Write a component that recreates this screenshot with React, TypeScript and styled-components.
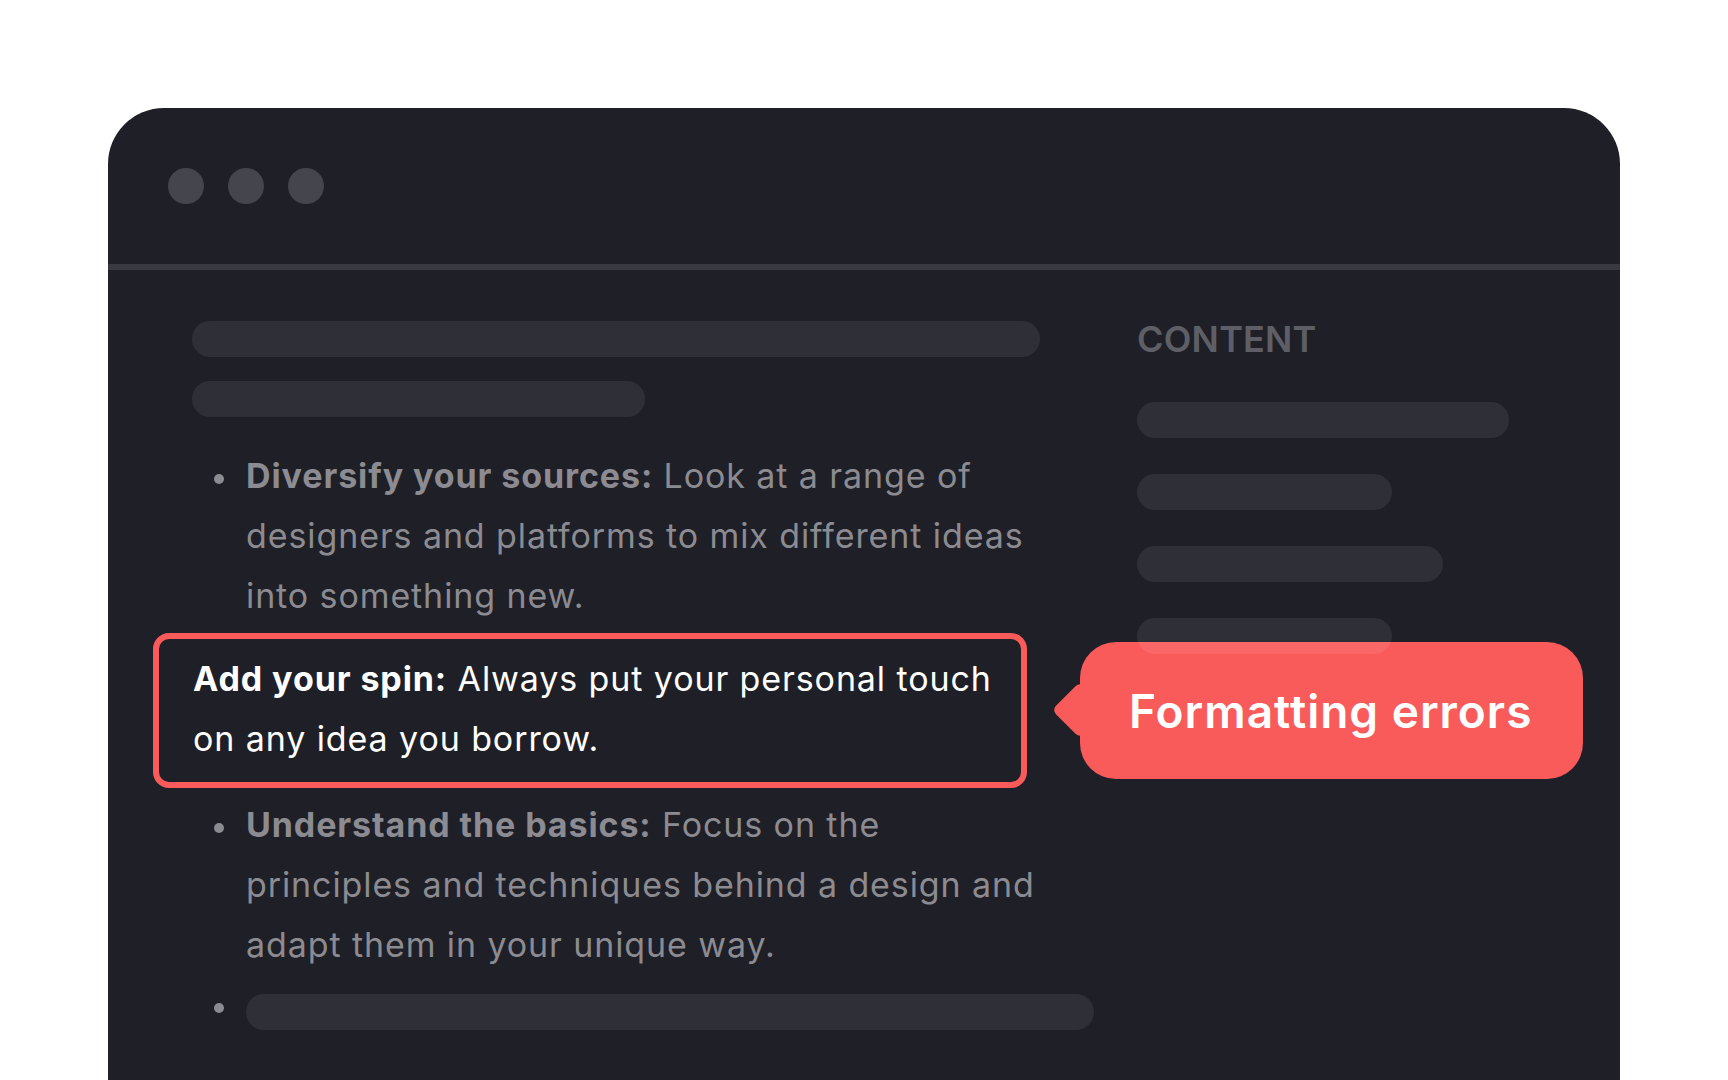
import styled, { createGlobalStyle } from 'styled-components';
import { FC, ReactNode } from 'react';

const GlobalStyle = createGlobalStyle`
	html, body {
		margin: 0;
		padding: 0;
		background: #ffffff;
	}
	body {
		font-family: Inter, 'Noto Sans', 'Liberation Sans', sans-serif;
	}
`;

const COLORS = {
	window: '#1f1f27',
	dot: '#45454e',
	divider: '#393942',
	skeleton: 'rgba(255, 255, 255, 0.075)',
	muted: '#8b8b91',
	heading: '#5e5f66',
	red: '#f95b5b',
	white: '#ffffff',
};

type BulletProps = {
	bulletTop?: number;
	children: ReactNode;
};

const Bullet: FC<BulletProps> = ({ bulletTop = 28, children }) => (
	<Item>
		<Dot style={{ top: bulletTop }} />
		{children}
	</Item>
);

const App: FC = () => {
	return (
		<>
			<GlobalStyle />
			<Page>
				<Window>
					<TitleBar>
						<TrafficDot />
						<TrafficDot />
						<TrafficDot />
					</TitleBar>
					<Body>
						<Main>
							<Skeleton width={848} />
							<Skeleton width={453} />
							<List>
								<Bullet>
									<Paragraph>
										<strong>Diversify your sources:</strong> Look at a range of designers and
										platforms to mix different ideas into something new.
									</Paragraph>
								</Bullet>
								<Highlight>
									<strong>Add your spin:</strong> Always put your personal touch on any idea
									you borrow.
								</Highlight>
								<Bullet>
									<Paragraph>
										<strong>Understand the basics:</strong> Focus on the principles and
										techniques behind a design and adapt them in your unique way.
									</Paragraph>
								</Bullet>
								<Bullet bulletTop={21}>
									<LineSlot>
										<Skeleton width={848} />
									</LineSlot>
								</Bullet>
							</List>
						</Main>
						<Sidebar>
							<SidebarTitle>CONTENT</SidebarTitle>
							<SidebarLinks>
								<Skeleton width={372} />
								<Skeleton width={255} />
								<Skeleton width={306} />
								<Skeleton width={255} />
							</SidebarLinks>
						</Sidebar>
						<Callout>
							<CalloutText>Formatting errors</CalloutText>
						</Callout>
					</Body>
				</Window>
			</Page>
		</>
	);
};

const Page = styled.div`
	width: 1728px;
	height: 1080px;
	box-sizing: border-box;
	padding: 108px 0 0 108px;
	overflow: hidden;
	background: #ffffff;
`;

const Window = styled.div`
	width: 1512px;
	min-height: 1000px;
	background: ${COLORS.window};
	border-radius: 56px 56px 0 0;
`;

const TitleBar = styled.div`
	height: 156px;
	display: flex;
	align-items: center;
	gap: 24px;
	padding-left: 60px;
	border-bottom: 6px solid ${COLORS.divider};
`;

const TrafficDot = styled.div`
	width: 36px;
	height: 36px;
	border-radius: 50%;
	background: ${COLORS.dot};
`;

const Body = styled.div`
	position: relative;
	display: grid;
	grid-template-columns: 902px 1fr;
	column-gap: 43px;
	padding: 51px 0 0 84px;
`;

const Main = styled.div`
	display: flex;
	flex-direction: column;
	align-items: flex-start;
	gap: 24px;
`;

const Skeleton = styled.div<{ width: number }>`
	width: ${(p) => p.width}px;
	height: 36px;
	border-radius: 18px;
	background: ${COLORS.skeleton};
	flex-shrink: 0;
`;

const List = styled.ul`
	list-style: none;
	margin: 5px 0 0;
	padding: 0;
	display: flex;
	flex-direction: column;
	gap: 7px;
	width: 100%;
`;

const Item = styled.li`
	position: relative;
	padding-left: 54px;
	font-size: 34px;
	letter-spacing: 0.9px;
	line-height: 60px;
	color: ${COLORS.muted};

	strong {
		font-weight: 700;
	}
`;

const Dot = styled.span`
	position: absolute;
	left: 22px;
	width: 10px;
	height: 10px;
	border-radius: 50%;
	background: ${COLORS.muted};
`;

const Paragraph = styled.p`
	margin: 0;
	max-width: 802px;
`;

const LineSlot = styled.div`
	height: 60px;
	display: flex;
	align-items: center;
`;

const Highlight = styled.li`
	box-sizing: border-box;
	width: 874px;
	margin-left: -39px;
	padding: 10px 20px 13px 34px;
	border: 6px solid ${COLORS.red};
	border-radius: 16px;
	font-size: 34px;
	letter-spacing: 0.9px;
	line-height: 60px;
	color: ${COLORS.white};

	strong {
		font-weight: 700;
	}
`;

const Sidebar = styled.aside`
	position: relative;
	z-index: 2;
	display: flex;
	flex-direction: column;
`;

const SidebarTitle = styled.div`
	font-size: 36px;
	line-height: 36px;
	font-weight: 600;
	color: ${COLORS.heading};
	letter-spacing: 0.2px;
`;

const SidebarLinks = styled.div`
	display: flex;
	flex-direction: column;
	gap: 36px;
	margin-top: 45px;
`;

const Callout = styled.div`
	position: absolute;
	z-index: 1;
	top: 372px;
	left: 972px;
	height: 137px;
	box-sizing: border-box;
	display: flex;
	align-items: center;
	padding: 0 51px 0 49px;
	background: ${COLORS.red};
	border-radius: 36px;

	&::before {
		content: '';
		position: absolute;
		left: -20px;
		top: 50%;
		width: 40px;
		height: 40px;
		margin-top: -21px;
		background: ${COLORS.red};
		border-radius: 6px;
		transform: rotate(45deg);
	}
`;

const CalloutText = styled.span`
	position: relative;
	font-size: 46px;
	letter-spacing: 1px;
	line-height: 60px;
	font-weight: 600;
	color: ${COLORS.white};
	white-space: nowrap;
`;

export default App;
